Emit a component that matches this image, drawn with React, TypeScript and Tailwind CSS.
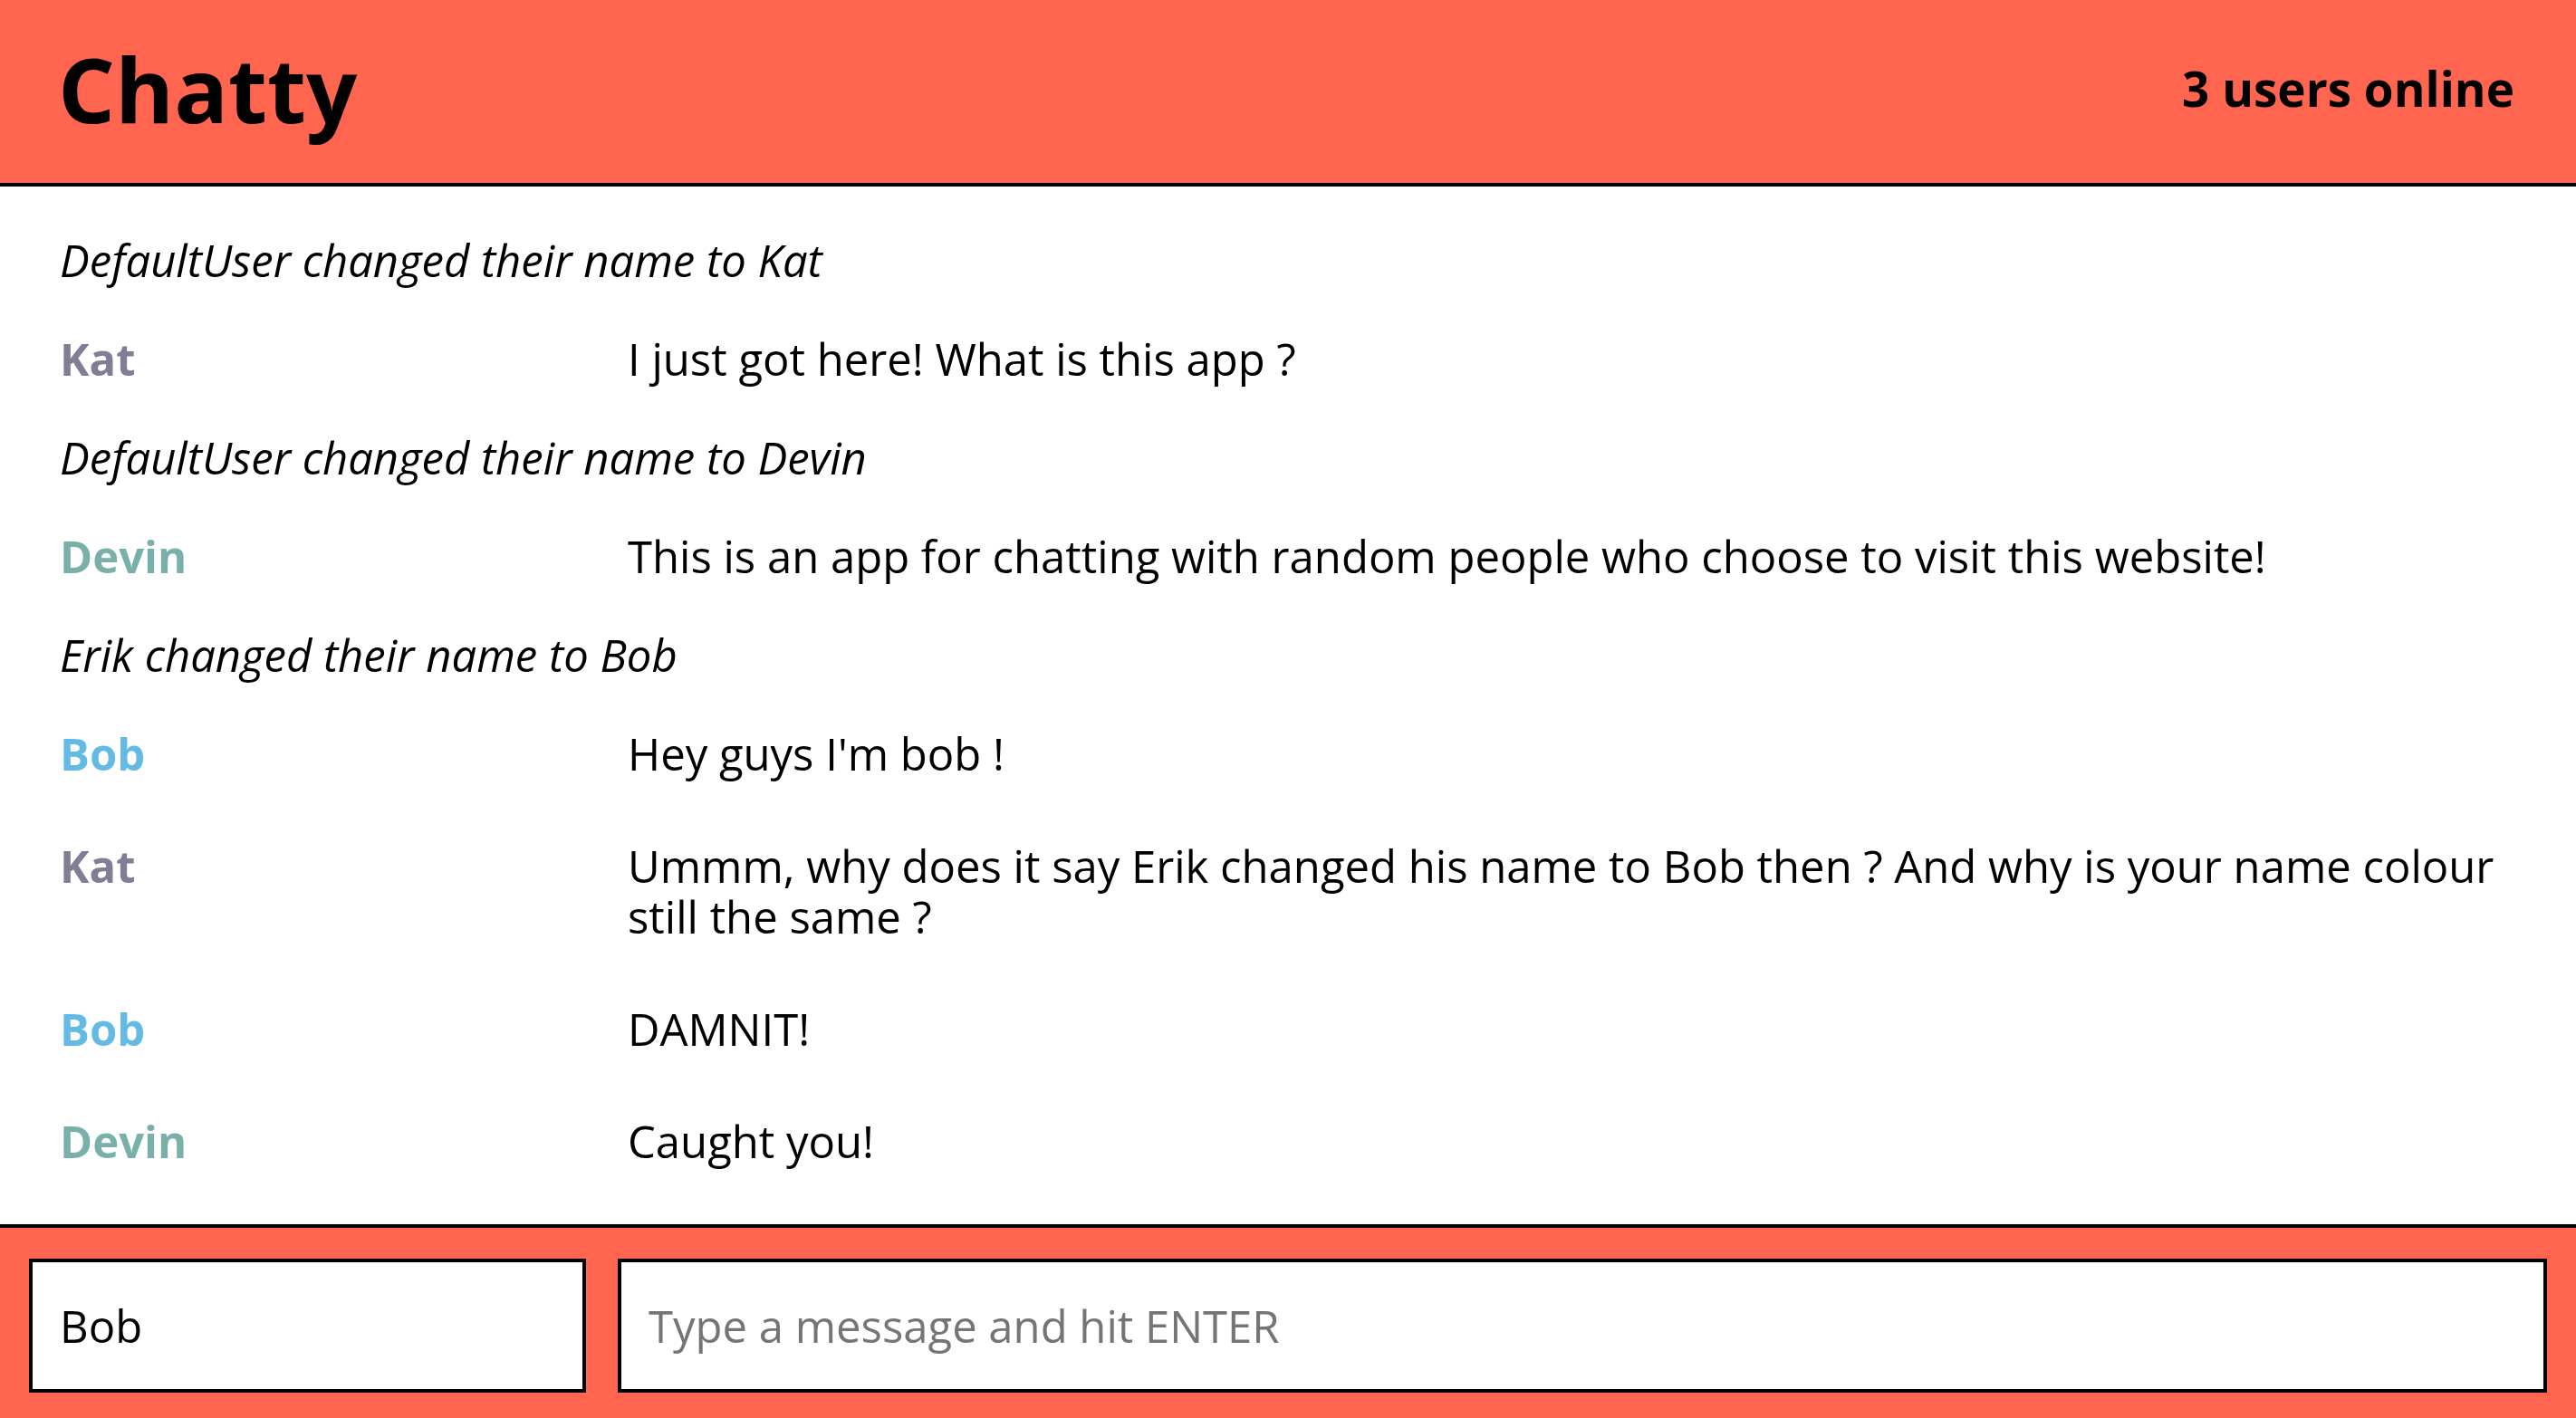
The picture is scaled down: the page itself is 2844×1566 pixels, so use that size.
import React from 'react';

type Item =
  | { kind: 'system'; text: string }
  | { kind: 'message'; user: string; color: string; text: string };

const items: Item[] = [
  { kind: 'system', text: 'DefaultUser changed their name to Kat' },
  { kind: 'message', user: 'Kat', color: 'text-[#807d96]', text: 'I just got here! What is this app ?' },
  { kind: 'system', text: 'DefaultUser changed their name to Devin' },
  {
    kind: 'message',
    user: 'Devin',
    color: 'text-[#7ab0aa]',
    text: 'This is an app for chatting with random people who choose to visit this website!',
  },
  { kind: 'system', text: 'Erik changed their name to Bob' },
  { kind: 'message', user: 'Bob', color: 'text-[#63bbe4]', text: "Hey guys I'm bob !" },
  {
    kind: 'message',
    user: 'Kat',
    color: 'text-[#807d96]',
    text: 'Ummm, why does it say Erik changed his name to Bob then ? And why is your name colour still the same ?',
  },
  { kind: 'message', user: 'Bob', color: 'text-[#63bbe4]', text: 'DAMNIT!' },
  { kind: 'message', user: 'Devin', color: 'text-[#7ab0aa]', text: 'Caught you!' },
];

export default function App() {
  return (
    <div className="flex h-screen flex-col bg-white font-['Open_Sans',sans-serif] text-black">
      {/* Navbar */}
      <nav className="flex h-[206px] shrink-0 items-center justify-between border-b-4 border-black bg-[#ff654f] pb-[8px] pl-[64px] pr-[68px]">
        <h1 className="text-[99px] font-bold leading-none">Chatty</h1>
        <span className="text-[53px] font-bold leading-none">3 users online</span>
      </nav>

      {/* Messages */}
      <main className="flex-1 overflow-hidden px-[66px] pt-[34px] text-[49px] leading-[56px]">
        {items.map((item, i) =>
          item.kind === 'system' ? (
            <div key={i} className="py-[19px] italic">
              {item.text}
            </div>
          ) : (
            <div key={i} className="flex py-[34px]">
              <span className={`w-[627px] shrink-0 font-bold ${item.color}`}>{item.user}</span>
              <span className="flex-1 pr-[20px]">{item.text}</span>
            </div>
          )
        )}
      </main>

      {/* Chat bar */}
      <footer className="flex shrink-0 gap-[35px] border-t-4 border-black bg-[#ff654f] px-[32px] pb-[28px] pt-[34px]">
        <input
          className="h-[148px] w-[615px] shrink-0 border-4 border-black bg-white px-[30px] text-[49px] text-black outline-none"
          defaultValue="Bob"
        />
        <input
          className="h-[148px] flex-1 border-4 border-black bg-white px-[30px] text-[49px] text-black outline-none placeholder:text-[#757575]"
          placeholder="Type a message and hit ENTER"
        />
      </footer>
    </div>
  );
}
